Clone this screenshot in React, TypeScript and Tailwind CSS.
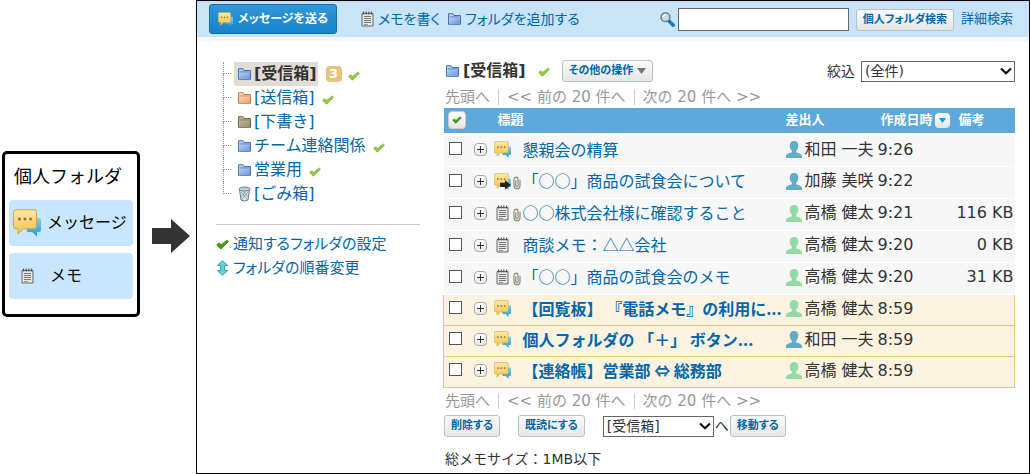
import React, { useId } from "react";

type IconProps = { className?: string };

function MessageIcon({ className = "size-[17px]", forward = false }: IconProps & { forward?: boolean }) {
  const id = useId();
  return (
    <svg viewBox="0 0 28 28" className={`shrink-0 ${className}`} aria-hidden="true">
      <defs>
        <linearGradient id={`${id}y`} x1="0" y1="0" x2="0" y2="1">
          <stop offset="0" stopColor="#fde9a2" />
          <stop offset="1" stopColor="#efc44c" />
        </linearGradient>
        <linearGradient id={`${id}b`} x1="0" y1="0" x2="0" y2="1">
          <stop offset="0" stopColor="#7fd0ee" />
          <stop offset="1" stopColor="#1e9be0" />
        </linearGradient>
      </defs>
      <path d="M14 9h12a2 2 0 0 1 2 2v10a2 2 0 0 1-2 2h-2v4.500l-5-4.500h-5z" fill={`url(#${id}b)`} />
      <path
        d="M3 .7h18a2.500 2.500 0 0 1 2.500 2.500v14a2.500 2.500 0 0 1-2.500 2.500H10.500L5 25v-5.300H3a2.500 2.500 0 0 1-2.500-2.500v-14A2.500 2.500 0 0 1 3 .7z"
        fill={`url(#${id}y)`}
        stroke="#cfa54f"
        strokeWidth="1"
      />
      <g fill="#94713a">
        <circle cx="6.500" cy="10" r="1.500" />
        <circle cx="12" cy="10" r="1.500" />
        <circle cx="17.500" cy="10" r="1.500" />
      </g>
      {forward && <path d="M10 16h8v-4.500l9.500 8-9.500 8V23h-8z" fill="#222" />}
    </svg>
  );
}

function MemoIcon({ className = "h-4 w-[13px]" }: IconProps) {
  return (
    <svg viewBox="0 0 13 16" className={`shrink-0 ${className}`} aria-hidden="true">
      <path d="M1 2.500h11v12.500H1z" fill="#e6e6e6" stroke="#666" />
      <path d="M2.500 .5v3M5.200 .5v3M7.800 .5v3M10.500 .5v3" stroke="#555" strokeWidth="1.200" />
      <path d="M3 5.500h7M3 7.500h7M3 9.500h7M3 11.500h7" stroke="#777" />
      <path d="M3 13.500h4" stroke="#999" />
    </svg>
  );
}

type FolderTone = "blue" | "orange" | "brown";
const folderColors: Record<FolderTone, [string, string, string]> = {
  blue: ["#b4d0f5", "#6697dc", "#4471b5"],
  orange: ["#fbd3b0", "#e9a06a", "#c77a45"],
  brown: ["#c3b59e", "#98866c", "#746349"],
};

function FolderIcon({ tone = "blue" }: { tone?: FolderTone }) {
  const id = useId();
  const [light, dark, line] = folderColors[tone];
  return (
    <svg viewBox="0 0 13 12" className="h-3 w-[13px] shrink-0" aria-hidden="true">
      <defs>
        <linearGradient id={id} x1="0" y1="0" x2="1" y2="1">
          <stop offset="0" stopColor={light} />
          <stop offset="1" stopColor={dark} />
        </linearGradient>
      </defs>
      <path d="M.5 .7h4.500l1 1.800h6.500v8.800H.5z" fill={light} stroke={line} />
      <path d="M1.500 4.500h10.500v6.300H1.500z" fill={`url(#${id})`} />
      <path d="M1.500 3.900h10" stroke={line} strokeWidth=".8" />
    </svg>
  );
}

function CheckIcon({ className = "h-2.5 w-3", dark = false }: IconProps & { dark?: boolean }) {
  return (
    <svg viewBox="0 0 12 10" className={`shrink-0 ${className}`} aria-hidden="true">
      <path
        d="M.6 5.200 2.600 3.700 4.700 5.300 10.300 1 11.500 2.200 5 8.900 3.900 8.900z"
        fill={dark ? "#43a00c" : "#93cc46"}
        stroke={dark ? "#2f8008" : "#79b52e"}
        strokeWidth=".7"
        strokeLinejoin="round"
      />
    </svg>
  );
}

function TrashIcon() {
  return (
    <svg viewBox="0 0 13 16" className="h-4 w-[13px] shrink-0" aria-hidden="true">
      <path d="M1.500 3.500 3 14q3.500 2 7 0l1.500-10.500z" fill="#dfe8ea" stroke="#5f7f88" />
      <path d="m3 6 6.500 8M5.500 5.500 10 11M10 6l-6.500 8M7.500 5.500 3 11" stroke="#6f9099" strokeWidth=".8" />
      <ellipse cx="6.500" cy="3" rx="5.500" ry="2" fill="#c4d3d7" stroke="#5f7f88" />
    </svg>
  );
}

function UpDownIcon() {
  return (
    <svg viewBox="0 0 12 16" className="h-4 w-[13px] shrink-0" aria-hidden="true">
      <path
        d="M6 .7 11.200 5.500H8v5h3.200L6 15.300.8 10.500H4v-5H.8z"
        fill="#5fd3d6"
        stroke="#2ba0a6"
        strokeWidth=".9"
        strokeLinejoin="round"
      />
    </svg>
  );
}

function SearchIcon() {
  return (
    <svg viewBox="0 0 15 15" className="size-[15px] shrink-0" aria-hidden="true">
      <path d="m9.500 9.500 3.800 3.800" stroke="#1b7ab8" strokeWidth="3.400" strokeLinecap="round" />
      <path d="m8.300 8.300 1.500 1.500" stroke="#3c4d58" strokeWidth="2" />
      <circle cx="5.500" cy="5.200" r="4.400" fill="#c3dcea" stroke="#6c7f8b" strokeWidth="1.500" />
      <path d="M3.200 4.800a2.400 2.400 0 0 1 2.200-2" fill="none" stroke="#fff" strokeWidth="1.200" />
    </svg>
  );
}

function PersonIcon({ tone }: { tone: "blue" | "green" }) {
  return (
    <svg viewBox="0 0 16 17" className="h-[17px] w-4 shrink-0" aria-hidden="true">
      <path
        d="M8 0c2.900 0 4.300 1.900 4.300 4.400 0 2.400-1 4.300-2.200 5.400v1.400c1 .9 5.900 1 5.900 4V17H0v-1.800c0-3 4.900-3.100 5.900-4V9.800C4.700 8.700 3.700 6.800 3.700 4.400 3.700 1.900 5.100 0 8 0z"
        fill={tone === "blue" ? "#62abcd" : "#92dba4"}
      />
    </svg>
  );
}

function ClipIcon() {
  return (
    <svg viewBox="0 0 8 13" className="mt-1 h-[14px] w-2 shrink-0" aria-hidden="true">
      <path
        d="M2.800 4v5.200q0 1.200 1.100 1.200T5 9.200V2.800Q5 .7 3.200 .7T1 2.800v6.400q0 3.100 3 3.100t3-3.100V3.500"
        fill="none"
        stroke="#8b8a72"
        strokeWidth="1.200"
      />
    </svg>
  );
}

function Chevron() {
  return (
    <svg
      viewBox="0 0 12 8"
      className="pointer-events-none absolute right-[3px] top-1/2 h-2 w-3 -translate-y-1/2"
      aria-hidden="true"
    >
      <path d="m1 1.500 5 4.700 5-4.700" fill="none" stroke="#111" strokeWidth="2.200" />
    </svg>
  );
}

const link = "text-[#0067aa] hover:underline";
const smallButton =
  "flex h-[22px] shrink-0 items-center whitespace-nowrap rounded-[3px] border border-[#b4c4c4] bg-linear-to-b from-[#fbfbfb] to-[#e6e6e6] px-[6px] text-[11px] font-bold leading-4 text-[#0067aa] [font-feature-settings:'palt']";

function Pager() {
  return (
    <nav className="flex h-6 items-center gap-2 whitespace-nowrap pl-0.5 pt-px text-[15px] leading-6 text-[#999]">
      <span>先頭へ</span>
      <span className="h-4 w-px bg-[#ccc]" />
      <span>&lt;&lt; 前の 20 件へ</span>
      <span className="h-4 w-px bg-[#ccc]" />
      <span>次の 20 件へ &gt;&gt;</span>
    </nav>
  );
}

type Folder = { name: string; tone?: FolderTone; notify?: boolean; unread?: number };
const folders: Folder[] = [
  { name: "[受信箱]", tone: "blue", notify: true, unread: 3 },
  { name: "[送信箱]", tone: "orange", notify: true },
  { name: "[下書き]", tone: "brown" },
  { name: "チーム連絡関係", tone: "blue", notify: true },
  { name: "営業用", tone: "blue", notify: true },
  { name: "[ごみ箱]" },
];

function FolderTree() {
  return (
    <ul className="pl-[7px]">
      {folders.map((f, i) => (
        <li key={f.name} className="flex h-6 items-center whitespace-nowrap text-[16px] leading-6">
          <span className="flex h-6 w-2 shrink-0 flex-col">
            <span className="h-3 border-b border-l border-dotted border-[#999]" />
            {i < folders.length - 1 && <span className="h-3 border-l border-dotted border-[#999]" />}
          </span>
          <a
            href="#folder"
            className={
              f.unread
                ? "ml-[3px] flex h-6 items-center gap-[3px] bg-[#e0ddd6] pl-1 pr-px font-bold text-[#333]"
                : "ml-[3px] flex h-6 items-center gap-[3px] pl-1 pr-px text-[#0067aa] hover:underline"
            }
          >
            {f.tone ? <FolderIcon tone={f.tone} /> : <TrashIcon />}
            {f.name}
          </a>
          {f.unread && (
            <span className="ml-2 flex size-4 items-center justify-center rounded-sm bg-[#e9c27c] text-[13px] font-bold leading-4 text-white">
              {f.unread}
            </span>
          )}
          {f.notify && <CheckIcon className="ml-[6px] mt-1 h-2.5 w-3" />}
        </li>
      ))}
    </ul>
  );
}

type Row = {
  kind: "message" | "forward" | "memo";
  clip?: boolean;
  title: string;
  sender: string;
  tone: "blue" | "green";
  time: string;
  size?: string;
  unread?: boolean;
};
const rows: Row[] = [
  { kind: "message", title: "懇親会の精算", sender: "和田 一夫", tone: "blue", time: "9:26" },
  { kind: "forward", clip: true, title: "「○○」商品の試食会について", sender: "加藤 美咲", tone: "blue", time: "9:22" },
  { kind: "memo", clip: true, title: "○○株式会社様に確認すること", sender: "高橋 健太", tone: "green", time: "9:21", size: "116 KB" },
  { kind: "memo", title: "商談メモ：△△会社", sender: "高橋 健太", tone: "green", time: "9:20", size: "0 KB" },
  { kind: "memo", clip: true, title: "「○○」商品の試食会のメモ", sender: "高橋 健太", tone: "green", time: "9:20", size: "31 KB" },
  { kind: "message", title: "【回覧板】 『電話メモ』の利用に...", sender: "高橋 健太", tone: "green", time: "8:59", unread: true },
  { kind: "message", title: "個人フォルダの 「＋」 ボタン...", sender: "和田 一夫", tone: "blue", time: "8:59", unread: true },
  { kind: "message", title: "【連絡帳】営業部 ⇔ 総務部", sender: "高橋 健太", tone: "green", time: "8:59", unread: true },
];

function MessageTable() {
  return (
    <table className="w-full table-fixed border-collapse text-[16px] leading-6 text-[#333]">
      <colgroup>
        <col className="w-[25px]" />
        <col className="w-[25px]" />
        <col className="w-[29px]" />
        <col />
        <col className="w-[94px]" />
        <col className="w-[77px]" />
        <col className="w-[60px]" />
      </colgroup>
      <thead>
        <tr className="h-[26px] border-b-[3px] border-white bg-[#5ea9db] text-left text-[13px] leading-5 text-white">
          <th className="p-0 pl-1" colSpan={2}>
            <button
              type="button"
              aria-label="すべて選択"
              className="flex h-[18px] w-[18px] items-center justify-center rounded-sm border border-[#ccc] bg-linear-to-b from-white to-[#e4e4e4]"
            >
              <CheckIcon dark className="h-2 w-2.5" />
            </button>
          </th>
          <th className="p-0 pl-1" colSpan={2}>標題</th>
          <th className="p-0 pl-0.5">差出人</th>
          <th className="p-0 pl-[3px]">
            <span className="flex items-center gap-0.5 whitespace-nowrap">
              作成日時
              <button
                type="button"
                aria-label="並べ替え"
                className="flex h-[15px] w-[15px] items-center justify-center rounded-sm bg-linear-to-b from-white to-[#e4e4e4]"
              >
                <svg viewBox="0 0 7 5" className="h-[5px] w-[7px]" aria-hidden="true">
                  <path d="M0 0h7L3.500 5z" fill="#00a0e9" />
                </svg>
              </button>
            </span>
          </th>
          <th className="p-0 pl-1">備考</th>
        </tr>
      </thead>
      <tbody>
        {rows.map((r) => (
          <tr
            key={r.title}
            className={
              r.unread
                ? "h-[31px] border border-[#e8c47c] bg-[#fcf2e0]"
                : "h-8 border-b border-white bg-[#f7f7f7]"
            }
          >
            <td className="p-0 pb-1 pl-[5px]">
              <input
                type="checkbox"
                aria-label={r.title}
                className="block size-[13px] appearance-none border border-[#555] bg-white checked:bg-[#5ea9db]"
              />
            </td>
            <td className="p-0 pb-0.5 pl-[5px]">
              <button
                type="button"
                aria-label="開く"
                className="flex size-[13px] items-center justify-center rounded-sm border border-[#aaa] bg-linear-to-b from-white to-[#e8e8e8]"
              >
                <svg viewBox="0 0 7 7" className="size-[7px] shrink-0" aria-hidden="true">
                  <path d="M3 0h1v3h3v1H4v3H3V4H0V3h3z" fill="#333" />
                </svg>
              </button>
            </td>
            <td className="p-0 pb-0.5 pl-px">
              <span className="flex items-center gap-0.5">
                <span className="flex w-4 justify-center">
                  {r.kind === "memo" ? <MemoIcon /> : <MessageIcon forward={r.kind === "forward"} />}
                </span>
                {r.clip && <ClipIcon />}
              </span>
            </td>
            <td className="p-0 pb-1">
              <a
                href="#message"
                className={`block whitespace-nowrap font-['Noto_Sans_CJK_JP',sans-serif] ${link} ${r.unread ? "font-bold" : ""}`}
              >
                {r.title}
              </a>
            </td>
            <td className="p-0 pb-0.5 pl-0.5">
              <span className="flex items-center gap-[3px] whitespace-nowrap">
                <PersonIcon tone={r.tone} />
                {r.sender}
              </span>
            </td>
            <td className="p-0 pb-0.5">{r.time}</td>
            <td className="whitespace-nowrap p-0 pb-0.5 pr-px text-right">{r.size}</td>
          </tr>
        ))}
      </tbody>
    </table>
  );
}

export default function App() {
  return (
    <div className="flex bg-white font-['DejaVu_Sans','Noto_Sans_CJK_JP',sans-serif] text-[#333]">
      <aside className="flex w-[196px] shrink-0 items-start gap-3 pl-0.5 pt-[151px]">
        <div className="w-[138px] rounded-[5px] border-[3px] border-black bg-white px-1 pb-[15px] pt-2 text-black">
          <h2 className="mb-2 pl-[5px] text-[18px] leading-[30px]">個人フォルダ</h2>
          <div className="flex flex-col gap-[7px] text-[16px] leading-6">
            <a href="#messages" className="flex h-[46px] items-center gap-[6px] rounded-sm bg-[#c8e6ff] pl-1">
              <MessageIcon className="size-7" />
              メッセージ
            </a>
            <a href="#memos" className="flex h-[46px] items-center gap-4 rounded-sm bg-[#c8e6ff] pl-3">
              <MemoIcon />
              メモ
            </a>
          </div>
        </div>
        <svg viewBox="0 0 38 34" className="mt-[68px] h-[34px] w-[38px] shrink-0" aria-hidden="true">
          <path d="M0 9h19V0l19 17-19 17V25H0z" fill="#333" />
        </svg>
      </aside>

      <div className="min-w-0 flex-1 border border-black">
        <header className="flex h-9 items-center bg-linear-to-b from-[#cbdcf4] to-[#c8e4f6] to-20% pl-3 pr-4">
          <button
            type="button"
            className="flex h-[30px] w-32 items-center justify-center gap-[5px] whitespace-nowrap rounded-[3px] border border-[#0f6fae] bg-linear-to-b from-[#3195d8] to-[#1583cb] text-[12px] font-bold leading-5 text-white [font-feature-settings:'palt']"
          >
            <MessageIcon className="size-[15px]" />
            メッセージを送る
          </button>
          <a href="#new-memo" className={`ml-6 flex items-center gap-1 whitespace-nowrap text-[14px] leading-6 [font-feature-settings:'palt'] ${link}`}>
            <MemoIcon />
            メモを書く
          </a>
          <a href="#new-folder" className={`ml-2 flex items-center gap-1 whitespace-nowrap text-[14px] leading-6 [font-feature-settings:'palt'] ${link}`}>
            <FolderIcon />
            フォルダを追加する
          </a>
          <form className="ml-auto flex items-center" onSubmit={(e) => e.preventDefault()}>
            <label htmlFor="search" aria-label="検索">
              <SearchIcon />
            </label>
            <input id="search" type="text" className="ml-[3px] h-[23px] w-[171px] border border-[#666] bg-white px-1 text-[14px]" />
            <button type="submit" className={`ml-[7px] mt-0.5 ${smallButton}`}>個人フォルダ検索</button>
            <a href="#advanced" className={`ml-[7px] whitespace-nowrap text-[13px] leading-5 ${link}`}>詳細検索</a>
          </form>
        </header>

        <div className="bg-[#f7f7f7] pt-[5px]">
          <main className="flex gap-[23px] rounded-t bg-white pb-0.5 pl-[19px] pr-3.5">
            <div className="w-[204px] shrink-0 pt-5">
              <FolderTree />
              <hr className="mb-[7px] mt-[18px] border-t border-[#ccc]" />
              <a href="#notify" className={`flex h-6 items-center gap-1 whitespace-nowrap text-[15px] leading-6 [font-feature-settings:'palt'] ${link}`}>
                <CheckIcon dark className="h-[11px] w-[13px]" />
                通知するフォルダの設定
              </a>
              <a href="#order" className={`flex h-6 items-center gap-1 whitespace-nowrap text-[15px] leading-6 [font-feature-settings:'palt'] ${link}`}>
                <UpDownIcon />
                フォルダの順番変更
              </a>
            </div>

            <section className="min-w-0 flex-1 pt-4">
              <div className="flex h-[26px] items-center pl-[3px]">
                <FolderIcon />
                <h1 className="ml-1 whitespace-nowrap text-[16px] font-bold leading-6">[受信箱]</h1>
                <CheckIcon className="ml-3 mt-0.5 h-2.5 w-3" />
                <button type="button" className={`ml-3 gap-1 ${smallButton}`}>
                  その他の操作
                  <svg viewBox="0 0 9 6" className="h-1.5 w-[9px]" aria-hidden="true">
                    <path d="M0 0h9L4.500 6z" fill="#777" />
                  </svg>
                </button>
                <label htmlFor="filter" className="ml-auto mr-[6px] whitespace-nowrap text-[14px] leading-5">絞込</label>
                <span className="relative">
                  <select id="filter" className="block h-[21px] w-[154px] appearance-none border border-[#666] bg-white px-[3px] text-[14px] leading-[18px]">
                    <option>(全件)</option>
                  </select>
                  <Chevron />
                </span>
              </div>
              <Pager />
              <MessageTable />
              <div className="pt-px">
                <Pager />
              </div>
              <div className="flex h-[27px] items-center pl-px text-[14px]">
                <button type="button" className={smallButton}>削除する</button>
                <button type="button" className={`ml-[18px] ${smallButton}`}>既読にする</button>
                <span className="relative ml-[18px]">
                  <select aria-label="移動先" className="block h-[21px] w-[111px] appearance-none border border-[#666] bg-white px-[3px] text-[14px] leading-[18px]">
                    <option>[受信箱]</option>
                  </select>
                  <Chevron />
                </span>
                <span className="mx-px leading-5">へ</span>
                <button type="button" className={smallButton}>移動する</button>
              </div>
              <p className="mt-[7px] pl-0.5 text-[14px] leading-6">総メモサイズ：1MB以下</p>
            </section>
          </main>
        </div>
      </div>
    </div>
  );
}
